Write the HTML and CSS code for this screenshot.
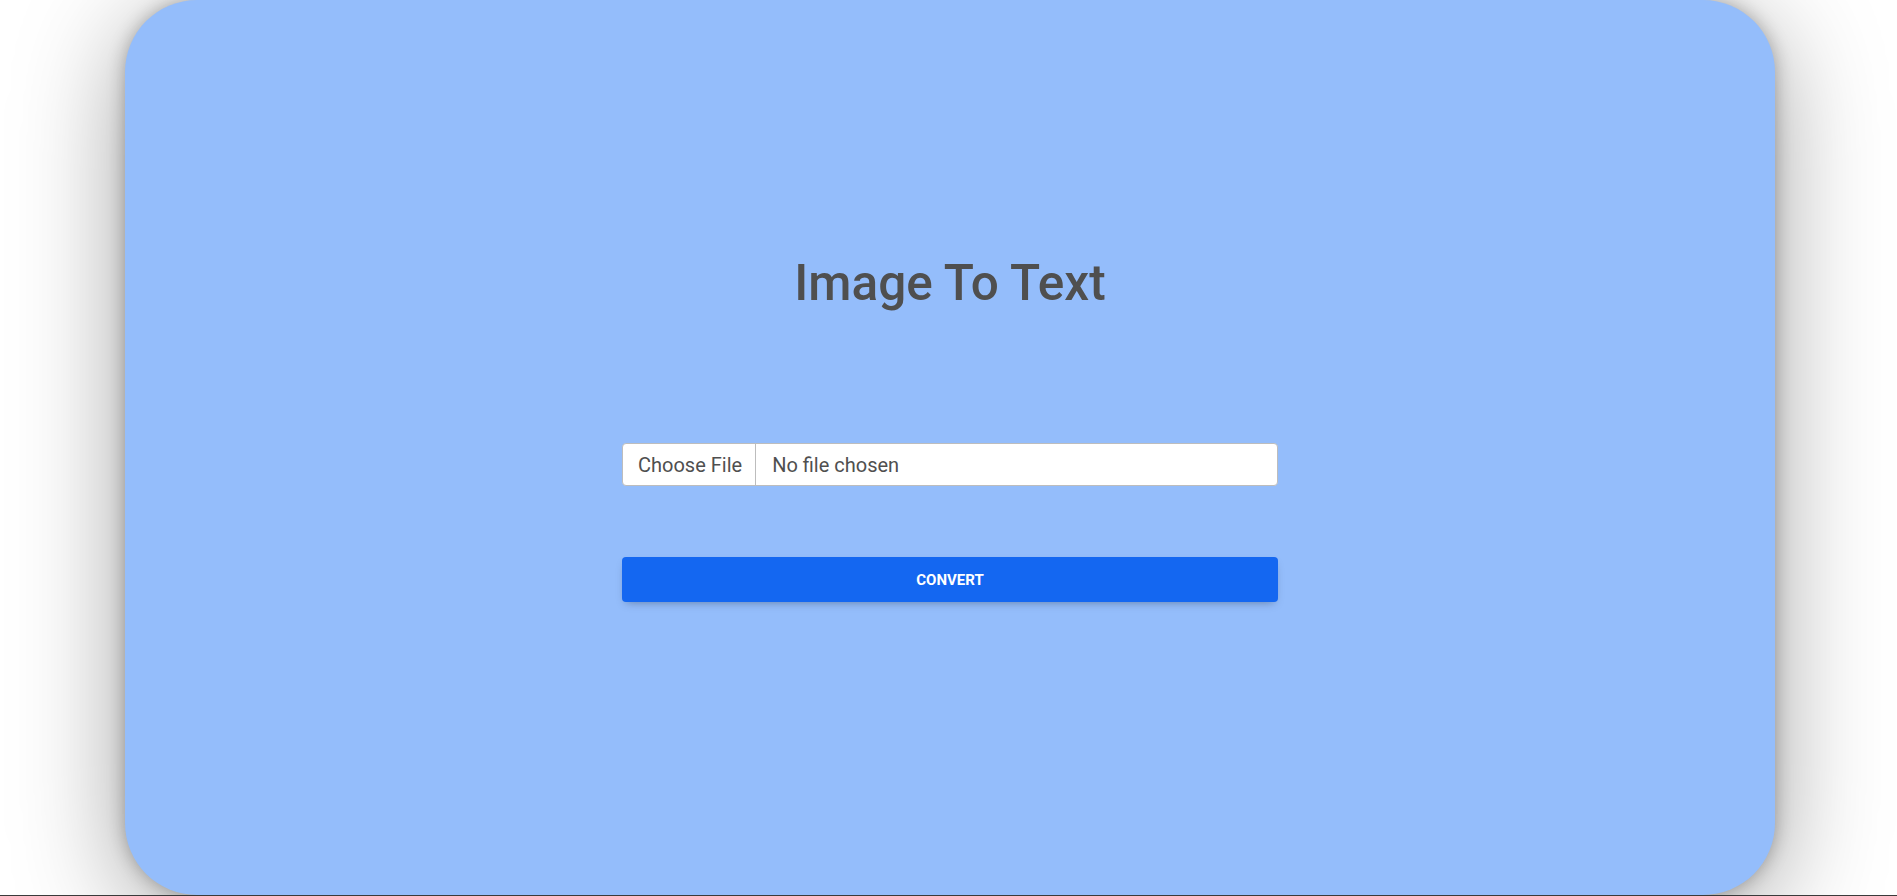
FILE: index.html
```html
<!DOCTYPE html>
<html lang="en">
<head>
<meta charset="utf-8">
<title>Image To Text</title>
<link rel="stylesheet" href="styles.css">
</head>
<body>
<main class="card">
  <h1 class="title">Image To Text</h1>
  <form class="form">
    <label class="file">
      <span class="file-btn">Choose File</span>
      <span class="file-name">No file chosen</span>
    </label>
    <button type="button" class="convert">Convert</button>
  </form>
</main>
<div class="bottom-line"></div>
</body>
</html>
```
FILE: styles.css
```css
html, body {
  margin: 0;
  padding: 0;
  background: #ffffff;
  font-family: Roboto, "Liberation Sans", sans-serif;
  overflow: hidden;
}

.card {
  box-sizing: border-box;
  height: 895px;
  margin: 0 122px 0 125px;
  background: #94bdfb;
  border-radius: 72px;
  box-shadow: 0 0 18px rgba(0, 0, 0, 0.28), 0 20px 110px rgba(0, 0, 0, 0.38);
  display: flex;
  flex-direction: column;
  align-items: center;
  padding-top: 253px;
}

.title {
  margin: 0;
  font-size: 49.5px;
  line-height: 60px;
  font-weight: 500;
  color: #4f4f4f;
}

.form {
  margin-top: 130px;
  width: 656px;
  display: flex;
  flex-direction: column;
  gap: 71px;
}

.file {
  box-sizing: border-box;
  height: 43px;
  display: flex;
  align-items: center;
  background: #ffffff;
  border: 1px solid #bdbdbd;
  border-radius: 4px;
  font-size: 20px;
  color: #4f4f4f;
}

.file-btn {
  height: 100%;
  display: flex;
  align-items: center;
  padding: 0 13px 0 15px;
  border-right: 1px solid #bdbdbd;
}

.file-name {
  padding-left: 16px;
}

.convert {
  height: 45px;
  border: none;
  border-radius: 4px;
  background: #1467f1;
  color: #ffffff;
  font-family: Roboto, "Liberation Sans", sans-serif;
  font-size: 15px;
  font-weight: 700;
  text-transform: uppercase;
  box-shadow: 0 4px 9px -4px rgba(0, 0, 0, 0.35);
}

.bottom-line {
  position: fixed;
  left: 0;
  right: 0;
  bottom: 0;
  height: 1px;
  background: #3a3a3a;
}
```
